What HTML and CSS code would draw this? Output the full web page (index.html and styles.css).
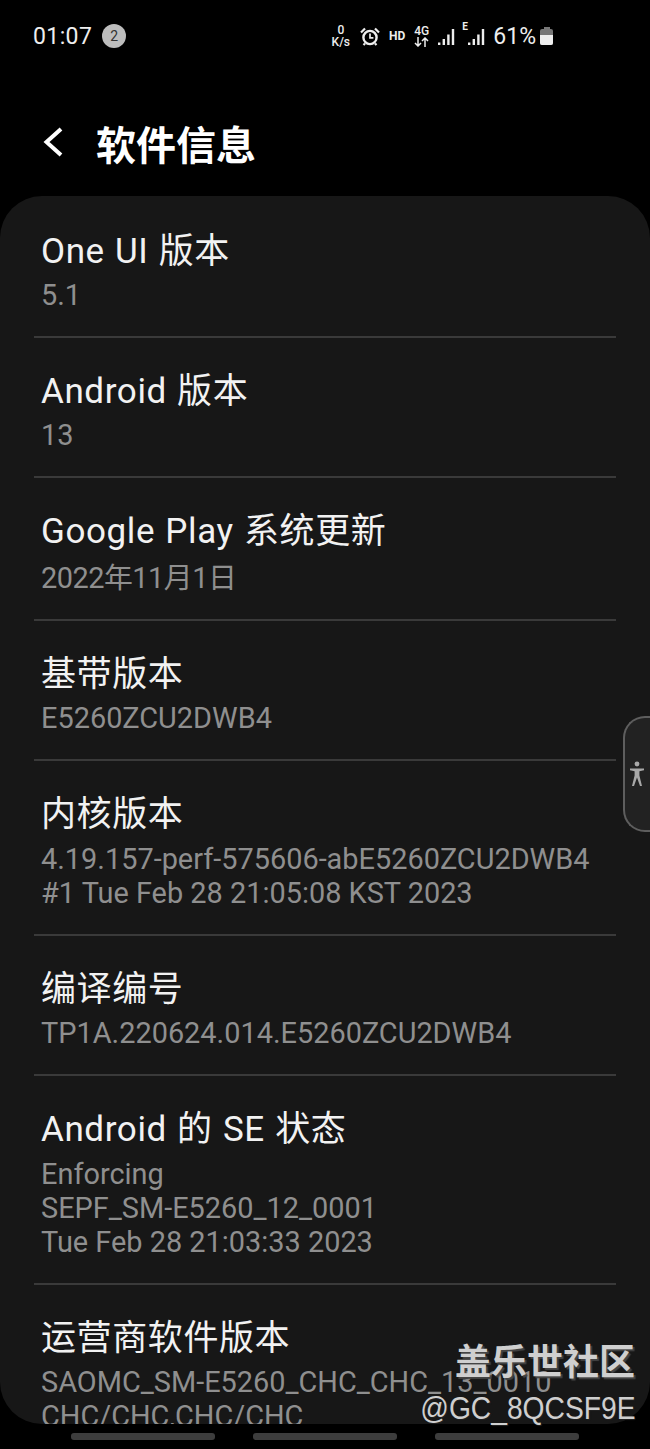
FILE: index.html
```html
<!DOCTYPE html>
<html lang="zh-CN">
<head>
    <meta charset="UTF-8">
    <meta name="viewport" content="width=device-width, initial-scale=1.0">
    <title>软件信息</title>
    <link rel="stylesheet" href="styles.css">
</head>
<body>
    <div class="status-bar">
        <div class="status-left">
            <span class="clock">01:07</span>
            <span class="notif-count">2</span>
        </div>
        <div class="status-right">
            <span class="net-speed"><span>0</span><span>K/s</span></span>
            <svg class="alarm" width="20" height="19" viewBox="0 0 20 19">
                <circle cx="10" cy="10.500" r="6.600" fill="none" stroke="#eee" stroke-width="2.400"/>
                <path d="M10 6.500v4.400h3.400" fill="none" stroke="#eee" stroke-width="1.700"/>
                <path d="M1 5.500 5 1.500M19 5.500 15 1.500M5 16.500 3.500 18M15 16.500 16.500 18" stroke="#eee" stroke-width="2.200"/>
            </svg>
            <span class="hd">HD</span>
            <span class="net-type">
                <span>4G</span>
                <svg width="15" height="10" viewBox="0 0 15 10">
                    <path d="M4 0v9M1 6l3 3 3-3M11 10V1M8 4l3-3 3 3" fill="none" stroke="#eee" stroke-width="1.500"/>
                </svg>
            </span>
            <svg class="signal" width="19" height="17" viewBox="0 0 19 17">
                <path d="M1 14.500h2.400V17H1zM5.600 11h2.400v6H5.600zM10.200 6.500h2.400V17h-2.400zM14.800 1h2.400v16h-2.400z" fill="#eee"/>
            </svg>
            <span class="signal-e">
                <span>E</span>
                <svg width="19" height="17" viewBox="0 0 19 17">
                    <path d="M1 14.500h2.400V17H1zM5.600 11h2.400v6H5.600zM10.200 6.500h2.400V17h-2.400zM14.800 1h2.400v16h-2.400z" fill="#eee"/>
                </svg>
            </span>
            <span class="battery-pct">61%</span>
            <span class="battery"><span class="battery-cap"></span><span class="battery-body"><span class="battery-fill"></span></span></span>
        </div>
    </div>

    <div class="app-bar">
        <svg class="back" width="22" height="34" viewBox="0 0 22 34">
            <path d="M19 3 4.500 16 19 29" fill="none" stroke="#fff" stroke-width="4"/>
        </svg>
        <h1>软件信息</h1>
    </div>

    <div class="card">
        <div class="row">
            <div class="row-title">One UI 版本</div>
            <div class="row-value">5.1</div>
        </div>
        <div class="row">
            <div class="row-title">Android 版本</div>
            <div class="row-value">13</div>
        </div>
        <div class="row">
            <div class="row-title">Google Play 系统更新</div>
            <div class="row-value row-value-date">2022年11月1日</div>
        </div>
        <div class="row">
            <div class="row-title">基带版本</div>
            <div class="row-value">E5260ZCU2DWB4</div>
        </div>
        <div class="row">
            <div class="row-title">内核版本</div>
            <div class="row-value row-value-multi">4.19.157-perf-575606-abE5260ZCU2DWB4<br>#1 Tue Feb 28 21:05:08 KST 2023</div>
        </div>
        <div class="row">
            <div class="row-title">编译编号</div>
            <div class="row-value">TP1A.220624.014.E5260ZCU2DWB4</div>
        </div>
        <div class="row">
            <div class="row-title">Android 的 SE 状态</div>
            <div class="row-value row-value-multi">Enforcing<br>SEPF_SM-E5260_12_0001<br>Tue Feb 28 21:03:33 2023</div>
        </div>
        <div class="row">
            <div class="row-title">运营商软件版本</div>
            <div class="row-value">SAOMC_SM-E5260_CHC_CHC_13_0010<br>CHC/CHC,CHC/CHC</div>
        </div>
    </div>

    <div class="nav-hints">
        <span></span>
        <span></span>
        <span></span>
    </div>

    <div class="a11y-tab">
        <svg width="16" height="26" viewBox="0 0 16 26">
            <circle cx="8" cy="3" r="2.400" fill="#a8a8a8"/>
            <path d="M1 7.500h14v1.800l-4.600 1v4.200L13 25h-2l-3-8.500L5 25H3l2.600-10.500v-4.200L1 9.300z" fill="#a8a8a8"/>
        </svg>
    </div>

    <div class="watermark">
        <div class="watermark-name">盖乐世社区</div>
        <div class="watermark-id">@GC_8QCSF9E</div>
    </div>
</body>
</html>
```

FILE: styles.css
```css
html, body {
    margin: 0;
    padding: 0;
}

body {
    position: relative;
    width: 650px;
    height: 1449px;
    overflow: hidden;
    background-color: #000;
    color: #fff;
    font-family: "Roboto", "Noto Sans CJK SC", sans-serif;
}

.status-bar {
    display: flex;
    justify-content: space-between;
    align-items: center;
    height: 36px;
    padding: 18px 97px 0 33px;
}

.status-left {
    display: flex;
    align-items: center;
    gap: 10px;
}

.clock {
    font-size: 23px;
    color: #eee;
    letter-spacing: 0.4px;
}

.notif-count {
    display: flex;
    align-items: center;
    justify-content: center;
    width: 24px;
    height: 24px;
    border-radius: 50%;
    background-color: #bdbdbd;
    color: #333;
    font-size: 14px;
}

.status-right {
    display: flex;
    align-items: center;
    color: #eee;
}

.net-speed {
    display: flex;
    flex-direction: column;
    align-items: center;
    font-size: 12px;
    line-height: 12px;
    font-weight: 500;
    margin-right: 10px;
}

.alarm {
    margin-right: 9px;
}

.hd {
    font-size: 12px;
    font-weight: 700;
    margin-right: 9px;
}

.net-type {
    display: flex;
    flex-direction: column;
    align-items: center;
    font-size: 12px;
    line-height: 12px;
    font-weight: 500;
    margin-right: 8px;
}

.net-type svg {
    display: block;
}

.signal {
    margin-right: 6px;
}

.signal-e {
    position: relative;
    padding-left: 5px;
    display: flex;
    margin-right: 7px;
}

.signal-e span {
    position: absolute;
    left: 0;
    top: -7px;
    font-size: 10px;
    font-weight: 700;
}

.battery-pct {
    font-size: 23px;
    margin-right: 4px;
}

.battery {
    display: flex;
    flex-direction: column;
    align-items: center;
    width: 13px;
}

.battery-cap {
    width: 6px;
    height: 2px;
    background-color: #777;
}

.battery-body {
    display: flex;
    align-items: flex-end;
    width: 13px;
    height: 16px;
    border-radius: 2px;
    background-color: #777;
    overflow: hidden;
}

.battery-fill {
    width: 100%;
    height: 10px;
    background-color: #eee;
}

.app-bar {
    display: flex;
    align-items: center;
    height: 38px;
    padding: 70px 0 34px 42px;
}

.back {
    margin-right: 32px;
}

h1 {
    margin: 0;
    font-family: "Noto Sans CJK SC", sans-serif;
    font-size: 40px;
    font-weight: 700;
    line-height: 38px;
}

.card {
    height: 1228px;
    padding: 34px 34px 0;
    box-sizing: border-box;
    overflow: hidden;
    background-color: #171717;
    border-radius: 42px;
}

.row {
    padding: 0 7px 24px;
    margin-bottom: 32px;
    border-bottom: 2px solid #3a3a3a;
}

.row:last-child {
    border-bottom: none;
    margin-bottom: 0;
}

.row-title {
    font-size: 35px;
    line-height: 44px;
    letter-spacing: 0.6px;
    word-spacing: 1px;
    color: #f2f2f2;
    margin-bottom: 4px;
    white-space: nowrap;
}

.row-value {
    font-size: 28.9px;
    line-height: 34px;
    color: #8f8f8f;
    white-space: nowrap;
}

.row-value-date {
    padding-top: 3px;
    letter-spacing: -0.5px;
}

.row-value-multi {
    padding-top: 1px;
}

.nav-hints {
    display: flex;
    justify-content: center;
    gap: 38px;
    margin-top: 9px;
}

.nav-hints span {
    width: 144px;
    height: 7px;
    border-radius: 3px;
    background-color: #3d3d3d;
}

.a11y-tab {
    position: absolute;
    top: 716px;
    right: 0;
    display: flex;
    align-items: center;
    justify-content: center;
    width: 23px;
    height: 112px;
    padding-right: 2px;
    border: 2px solid #5e5e5e;
    border-right: none;
    border-radius: 22px 0 0 22px;
    background-color: #222;
}

.watermark {
    position: absolute;
    top: 1337px;
    right: 15px;
    text-align: right;
    font-family: "Noto Sans CJK SC", sans-serif;
    color: #cfcfcf;
}

.watermark-name {
    font-size: 36px;
    line-height: 44px;
    font-weight: 700;
    text-shadow: 2px 2px 1px #444;
}

.watermark-id {
    margin-top: 6px;
    font-family: "Liberation Sans", sans-serif;
    font-size: 31px;
    line-height: 44px;
    text-shadow: 1px 1px 1px #222;
    transform: scaleX(0.91);
    transform-origin: right center;
}
```
